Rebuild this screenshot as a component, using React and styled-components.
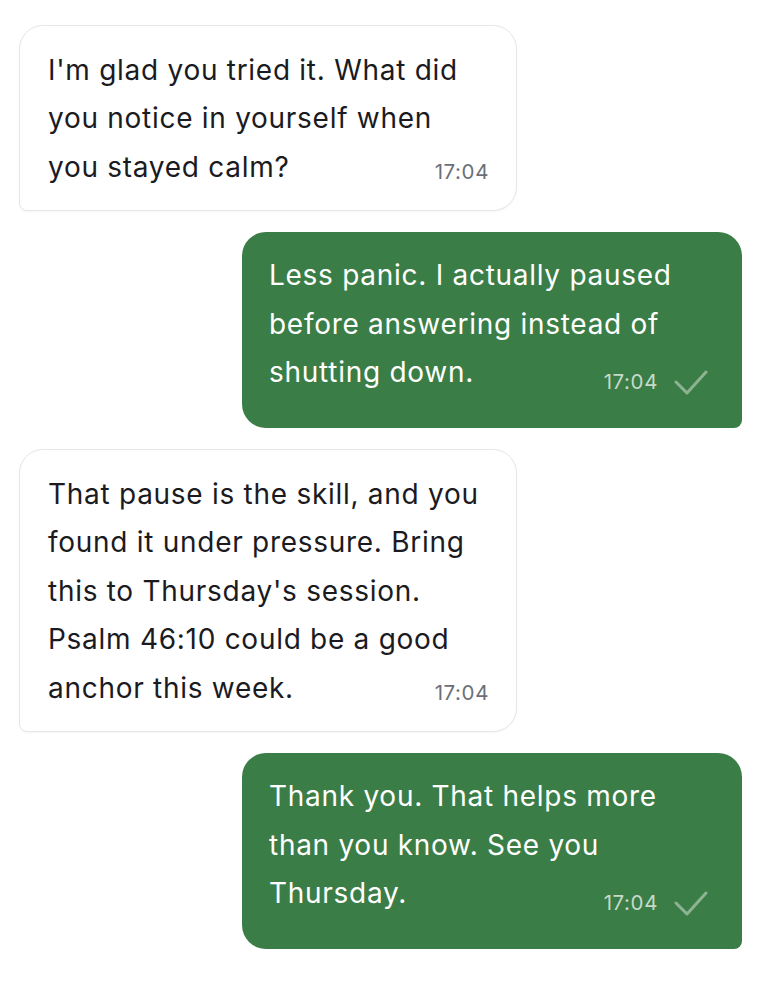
import React from 'react'
import styled, { createGlobalStyle } from 'styled-components'

const GlobalStyle = createGlobalStyle`
  html, body {
    margin: 0;
    padding: 0;
    background: #ffffff;
  }
  body {
    font-family: Inter, "Noto Sans", "Liberation Sans", sans-serif;
    -webkit-font-smoothing: antialiased;
  }
`

const Thread = styled.div`
  display: flex;
  flex-direction: column;
  gap: 21px;
  padding: 25px 18px;
`

const Bubble = styled.div`
  box-sizing: border-box;
  width: ${p => p.mine ? '500px' : '498px'};
  margin-left: ${p => p.mine ? 'auto' : '1px'};
  padding: ${p => p.mine ? '19px 32px 21px 27px' : '19.5px 32px 19px 28px'};
  background: ${p => p.mine ? '#3b7d46' : '#ffffff'};
  color: ${p => p.mine ? '#ffffff' : '#1b1b1f'};
  border: ${p => p.mine ? 'none' : '1.5px solid #e6e6ea'};
  border-radius: ${p => p.mine ? '24px 24px 8px 24px' : '24px 24px 24px 8px'};
  box-shadow: ${p => p.mine ? 'none' : '0 1px 2px rgba(0, 0, 0, 0.04)'};
`

const Text = styled.p`
  display: flow-root;
  margin: 0;
  font-size: 28px;
  line-height: 48.5px;
  letter-spacing: 0.72px;
`

const Meta = styled.span`
  float: right;
  display: flex;
  align-items: center;
  gap: 16px;
  height: 30px;
  margin: ${p => p.mine ? '19px 2px 10px 24px' : '14px -5px 0 24px'};
  font-size: 20.5px;
  line-height: 30px;
  letter-spacing: 0.6px;
  color: ${p => p.mine ? 'rgba(255, 255, 255, 0.72)' : '#6b6f7a'};
`

const Tick = () => (
  <svg width="34" height="26" viewBox="0 0 34 26" fill="none">
    <path
      d="M2 13 L13 24 L32 3"
      stroke="rgba(255, 255, 255, 0.42)"
      strokeWidth="3"
      strokeLinecap="round"
      strokeLinejoin="round"
    />
  </svg>
)

const messages = [
  { mine: false, time: '17:04', text: "I'm glad you tried it. What did you notice in yourself when you stayed calm?" },
  { mine: true, time: '17:04', text: 'Less panic. I actually paused before answering instead of shutting down.' },
  { mine: false, time: '17:04', text: "That pause is the skill, and you found it under pressure. Bring this to Thursday's session. Psalm 46:10 could be a good anchor this week." },
  { mine: true, time: '17:04', text: 'Thank you. That helps more than you know. See you Thursday.' },
]

const Message = ({ mine, time, text }) => (
  <Bubble mine={mine}>
    <Text>
      {text}
      <Meta mine={mine}>
        {time}
        {mine && <Tick />}
      </Meta>
    </Text>
  </Bubble>
)

export default function App() {
  return (
    <>
      <GlobalStyle />
      <Thread>
        {messages.map((m, i) => (
          <Message key={i} {...m} />
        ))}
      </Thread>
    </>
  )
}
